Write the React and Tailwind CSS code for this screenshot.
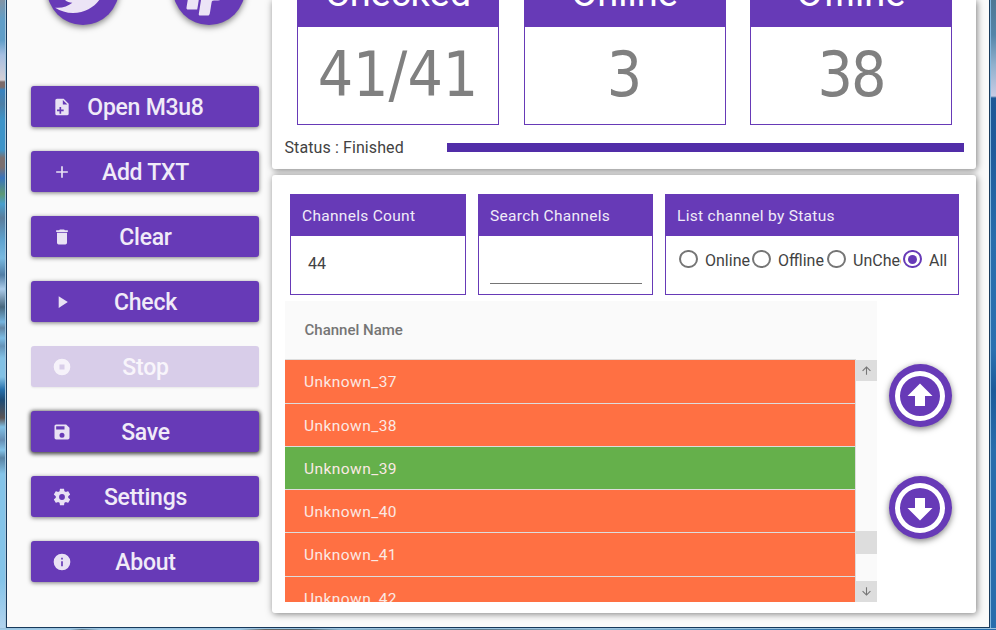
import React, { useState } from 'react';
import clsx from 'clsx';

const ICONS = {
  twitter:
    'M22.46,6C21.69,6.35 20.86,6.58 20,6.69C20.88,6.16 21.56,5.32 21.88,4.31C21.05,4.81 20.13,5.16 19.16,5.36C18.37,4.5 17.26,4 16,4C13.65,4 11.73,5.92 11.73,8.29C11.73,8.63 11.77,8.96 11.84,9.27C8.28,9.09 5.11,7.38 3,4.79C2.63,5.42 2.42,6.16 2.42,6.94C2.42,8.43 3.17,9.75 4.33,10.5C3.62,10.5 2.96,10.3 2.38,10V10.03C2.38,12.11 3.86,13.85 5.82,14.24C5.46,14.34 5.08,14.39 4.69,14.39C4.42,14.39 4.15,14.36 3.89,14.31C4.43,16 6,17.26 7.89,17.29C6.43,18.45 4.58,19.13 2.56,19.13C2.22,19.13 1.88,19.11 1.54,19.07C3.44,20.29 5.7,21 8.12,21C16,21 20.33,14.46 20.33,8.79C20.33,8.6 20.33,8.42 20.32,8.23C21.16,7.63 21.88,6.87 22.46,6Z',
  paypal:
    'M8.32,21.97C8.21,21.92 8.08,21.76 8.06,21.65C8.03,21.5 8,21.76 8.66,17.56C9.26,13.76 9.25,13.82 9.33,13.71C9.46,13.54 9.44,13.54 10.94,13.53C12.26,13.5 12.54,13.5 13.13,13.41C16.38,12.96 18.39,11.05 19.09,7.75C19.13,7.53 19.17,7.34 19.18,7.34C19.18,7.33 19.25,7.38 19.33,7.44C20.36,8.22 20.71,9.66 20.32,11.58C19.86,13.87 18.64,15.39 16.74,16.04C15.93,16.32 15.25,16.43 14.05,16.46C13.25,16.5 13.23,16.5 13,16.65C12.83,16.82 12.84,16.79 12.45,19.2C12.18,20.9 12.08,21.45 12.04,21.55C11.97,21.71 11.83,21.85 11.67,21.93L11.56,22H10C8.71,22 8.38,22 8.32,21.97M3.82,19.74C3.63,19.64 3.5,19.47 3.5,19.27C3.5,19 6.11,2.68 6.18,2.5C6.27,2.32 6.5,2.13 6.68,2.06L6.83,2H10.36C14.27,2 14.12,2 15,2.2C17.62,2.75 18.82,4.5 18.37,7.13C17.87,10.06 16.39,11.8 13.87,12.43C13,12.64 12.39,12.7 10.73,12.7C9.42,12.7 9.32,12.7 9.06,12.85C8.8,13 8.59,13.27 8.5,13.57C8.46,13.67 8.23,15.07 7.97,16.7C7.71,18.33 7.5,19.69 7.47,19.72V19.78H5.69C4.11,19.78 3.89,19.78 3.82,19.74Z',
  filePlus:
    'M14,2H6A2,2 0 0,0 4,4V20A2,2 0 0,0 6,22H18A2,2 0 0,0 20,20V8L14,2M13,3.5L18.5,9H13V3.5M11,15V12H9V15H6V17H9V20H11V17H14V15H11Z',
  plus: 'M19,13H13V19H11V13H5V11H11V5H13V11H19V13Z',
  trash:
    'M19,4H15.5L14.5,3H9.5L8.5,4H5V6H19M6,19A2,2 0 0,0 8,21H16A2,2 0 0,0 18,19V7H6V19Z',
  play: 'M8,5.14V19.14L19,12.14L8,5.14Z',
  stop: 'M12,2A10,10 0 0,0 2,12A10,10 0 0,0 12,22A10,10 0 0,0 22,12A10,10 0 0,0 12,2M9,9H15V15H9',
  save: 'M15,9H5V5H15M12,19A3,3 0 0,1 9,16A3,3 0 0,1 12,13A3,3 0 0,1 15,16A3,3 0 0,1 12,19M17,3H5C3.89,3 3,3.9 3,5V19A2,2 0 0,0 5,21H19A2,2 0 0,0 21,19V7L17,3Z',
  cog: 'M12,15.5A3.5,3.5 0 0,1 8.5,12A3.5,3.5 0 0,1 12,8.5A3.5,3.5 0 0,1 15.5,12A3.5,3.5 0 0,1 12,15.5M19.43,12.97C19.47,12.65 19.5,12.33 19.5,12C19.5,11.67 19.47,11.34 19.43,11L21.54,9.37C21.73,9.22 21.78,8.95 21.66,8.73L19.66,5.27C19.54,5.05 19.27,4.96 19.05,5.05L16.56,6.05C16.04,5.66 15.5,5.32 14.87,5.07L14.5,2.42C14.46,2.18 14.25,2 14,2H10C9.75,2 9.54,2.18 9.5,2.42L9.13,5.07C8.5,5.32 7.96,5.66 7.44,6.05L4.95,5.05C4.73,4.96 4.46,5.05 4.34,5.27L2.34,8.73C2.21,8.95 2.27,9.22 2.46,9.37L4.57,11C4.53,11.34 4.5,11.67 4.5,12C4.5,12.33 4.53,12.65 4.57,12.97L2.46,14.63C2.27,14.78 2.21,15.05 2.34,15.27L4.34,18.73C4.46,18.95 4.73,19.03 4.95,18.95L7.44,17.94C7.96,18.34 8.5,18.68 9.13,18.93L9.5,21.58C9.54,21.82 9.75,22 10,22H14C14.25,22 14.46,21.82 14.5,21.58L14.87,18.93C15.5,18.67 16.04,18.34 16.56,17.94L19.05,18.95C19.27,19.03 19.54,18.95 19.66,18.73L21.66,15.27C21.78,15.05 21.73,14.78 21.54,14.63L19.43,12.97Z',
  info: 'M13,9H11V7H13M13,17H11V11H13M12,2A10,10 0 0,0 2,12A10,10 0 0,0 12,22A10,10 0 0,0 22,12A10,10 0 0,0 12,2Z',
  upCircle:
    'M12,22A10,10 0 0,1 2,12A10,10 0 0,1 12,2A10,10 0 0,1 22,12A10,10 0 0,1 12,22M12,20A8,8 0 0,0 20,12A8,8 0 0,0 12,4A8,8 0 0,0 4,12A8,8 0 0,0 12,20M12,7L7,12H10V16H14V12H17L12,7Z',
  downCircle:
    'M12,2A10,10 0 0,1 22,12A10,10 0 0,1 12,22A10,10 0 0,1 2,12A10,10 0 0,1 12,2M12,4A8,8 0 0,0 4,12A8,8 0 0,0 12,20A8,8 0 0,0 20,12A8,8 0 0,0 12,4M14,8V12H17L12,17L7,12H10V8H14Z',
  arrowUp: 'M13,20H11V8L5.5,13.5L4.08,12.08L12,4.16L19.92,12.08L18.5,13.5L13,8V20Z',
  arrowDown: 'M11,4H13V16L18.5,10.5L19.92,11.92L12,19.84L4.08,11.92L5.5,10.5L11,16V4Z',
};

const Icon = ({ name, className }) => (
  <svg viewBox="0 0 24 24" fill="currentColor" fillRule="evenodd" className={clsx('shrink-0', className)}>
    <path d={ICONS[name]} />
  </svg>
);

const actions = [
  { label: 'Open M3u8', icon: 'filePlus' },
  { label: 'Add TXT', icon: 'plus' },
  { label: 'Clear', icon: 'trash' },
  { label: 'Check', icon: 'play' },
  { label: 'Stop', icon: 'stop', disabled: true },
  { label: 'Save', icon: 'save', raised: true },
  { label: 'Settings', icon: 'cog' },
  { label: 'About', icon: 'info' },
];

const stats = [
  { label: 'Checked', value: '41/41', tracking: 'tracking-normal' },
  { label: 'Online', value: '3', tracking: 'tracking-normal' },
  { label: 'Offline', value: '38', tracking: 'tracking-[-2px]' },
];

const channels = [
  { name: 'Unknown_37', online: false },
  { name: 'Unknown_38', online: false },
  { name: 'Unknown_39', online: true },
  { name: 'Unknown_40', online: false },
  { name: 'Unknown_41', online: false },
  { name: 'Unknown_42', online: false },
];

const filters = [
  { label: 'Online', width: 'w-[73px]' },
  { label: 'Offline', width: 'w-[75px]' },
  { label: 'UnChecked', width: 'mr-[2px] w-[74px]' },
  { label: 'All', width: 'w-[52px]' },
];

const ActionButton = ({ label, icon, disabled, raised }) => (
  <button
    disabled={disabled}
    className={clsx(
      'flex h-[41px] w-[228px] shrink-0 items-center rounded-[3px] pl-[21px]',
      disabled && 'bg-[#d8cde9] text-[#f8f5fb] shadow-[0_1px_2px_rgba(0,0,0,0.08)]',
      !disabled && 'bg-[#673ab7] text-[#f0ebf8]',
      !disabled && !raised && 'shadow-[0_1px_4px_rgba(0,0,0,0.5)]',
      raised && 'shadow-[0_1px_4px_1px_rgba(0,0,0,0.75)]'
    )}
  >
    <Icon name={icon} className="size-[20px] opacity-95" />
    <span className="w-[147px] pt-[3px] text-center text-[23px] leading-[40px] font-[550] tracking-[-0.25px]">{label}</span>
  </button>
);

const RoundButton = ({ icon, size, iconSize, tone }) => (
  <button
    className={clsx(
      'flex shrink-0 items-center justify-center rounded-full bg-[#673ab7] shadow-[0_2px_6px_rgba(0,0,0,0.5)]',
      size,
      tone
    )}
  >
    <Icon name={icon} className={iconSize} />
  </button>
);

const Panel = ({ title, className, children }) => (
  <div className={clsx('flex h-[101px] flex-col border border-[#673ab7]', className)}>
    <div className="h-[41px] shrink-0 bg-[#673ab7] pl-[11px] text-[15.5px] leading-[42px] font-[450] tracking-[0.3px] text-[#f0ebf8]">{title}</div>
    {children}
  </div>
);

const Radio = ({ checked }) => (
  <span
    className={clsx(
      'flex h-[18px] w-[19px] shrink-0 items-center justify-center rounded-full border-2',
      checked ? 'border-[#673ab7]' : 'border-[#757575]'
    )}
  >
    {checked && <span className="size-[9px] rounded-full bg-[#673ab7]" />}
  </span>
);

export default function App() {
  const [filter, setFilter] = useState('All');

  return (
    <div className="flex h-[630px] w-[996px] flex-col overflow-hidden bg-[#3b7fb5] font-['Roboto',sans-serif] text-[#424242]">
      <div className="flex h-[628px] shrink-0">
        {/* Desktop, left edge */}
        <div className="w-[6px] shrink-0 border-r border-[#a3c6dd] bg-[linear-gradient(180deg,#8394a5_0px,#609ec8_20px,#609ec8_40px,#a5bfe2_55px,#d5d0d5_80px,#7c6b69_82px,#7c6b69_87px,#3683c0_90px,#4d7fa6_104px,#3d94c9_120px,#3d94c9_150px,#7b706f_158px,#7b706f_167px,#3874bd_178px,#5d9975_194px,#489fce_204px,#5b7d9b_218px,#5fa3cf_240px,#78b9e0_258px,#517ea6_275px,#aacbe9_289px,#48687e_307px,#75b4de_322px,#6486a4_328px,#7bbce4_338px,#6593b8_346px,#82c1e5_358px,#82c1e5_377px,#236da9_390px,#1d4b75_400px,#5c5454_418px,#80c0e5_427px,#668eb4_440px,#83c3e8_450px,#5983a4_458px,#84c4e9_474px,#84c4e9_580px,#b1d3ee_628px)]" />

        {/* App window */}
        <div className="flex w-[984px] shrink-0 overflow-hidden border-x border-b border-[#17395b] bg-[#fafafa]">
          <aside className="flex w-[265px] shrink-0 flex-col pl-6">
            <div className="-mt-[47.5px] flex gap-[54px] pl-[16px]">
              <RoundButton icon="twitter" size="size-[72px]" iconSize="size-[65px]" tone="text-[#ece4f6]" />
              <RoundButton icon="paypal" size="size-[72px]" iconSize="size-[65px]" tone="text-[#ece4f6]" />
            </div>
            <div className="mt-[61.5px] flex flex-col gap-6">
              {actions.map((action) => (
                <ActionButton key={action.label} {...action} />
              ))}
            </div>
          </aside>

          <main className="flex w-[704px] shrink-0 flex-col gap-[6px]">
            {/* Check results */}
            <section className="h-[169px] shrink-0 rounded-b-[3px] bg-white shadow-[1px_1px_7px_rgba(0,0,0,0.5)]">
              <div className="-mt-[32px] flex gap-[24.5px] pl-[25px]">
                {stats.map((stat) => (
                  <div key={stat.label} className="h-[157px] w-[202px] shrink-0 border border-[#673ab7]">
                    <div className="h-[58px] bg-[#673ab7] text-center text-[38px] leading-[48px] font-[450] text-white">
                      {stat.label}
                    </div>
                    <div
                      className={clsx(
                        "text-center font-['DejaVu_Sans_Condensed','DejaVu_Sans',sans-serif] text-[62px] leading-[96px] font-stretch-condensed text-[#808080]",
                        stat.tracking
                      )}
                    >
                      {stat.value}
                    </div>
                  </div>
                ))}
              </div>
              <div className="flex h-[44px] items-center pl-[12.5px]">
                <span className="w-[162px] pt-[2px] text-[16px] tracking-[0.1px]">Status : Finished</span>
                <div className="h-[9px] w-[517px] bg-[#512da8]" />
              </div>
            </section>

            {/* Channel list */}
            <section className="h-[438px] shrink-0 rounded-[3px] bg-white pt-[19px] shadow-[1px_1px_7px_rgba(0,0,0,0.5)]">
              <div className="flex gap-[12px] pl-[18px]">
                <Panel title="Channels Count" className="w-[176px]">
                  <span className="pt-[16px] pl-[17px] text-[16px] leading-6">44</span>
                </Panel>
                <Panel title="Search Channels" className="w-[175px]">
                  <input className="mt-[18px] mr-[10px] ml-[11px] h-[30px] border-b border-[#757575] outline-none" />
                </Panel>
                <Panel title="List channel by Status" className="w-[294px]">
                  <div className="flex pt-[14px] pl-[13px]">
                    {filters.map(({ label, width }) => (
                      <label
                        key={label}
                        onClick={() => setFilter(label)}
                        className={clsx('flex shrink-0 items-start gap-[7px] overflow-hidden text-[16px] leading-[20px]', width)}
                      >
                        <Radio checked={filter === label} />
                        <span className="pt-px">{label}</span>
                      </label>
                    ))}
                  </div>
                </Panel>
              </div>

              <div className="mt-[6px] flex pl-[13px]">
                <div className="w-[592px] shrink-0 bg-[#fafafa]">
                  <div className="h-[58.3px] pl-[19.5px] text-[15px] leading-[58px] font-medium text-[#757575]">Channel Name</div>
                  <div className="flex h-[242.7px] overflow-hidden">
                    <div className="w-[571px] shrink-0 border-r border-[#dddddd]">
                      {channels.map((channel) => (
                        <div
                          key={channel.name}
                          className={clsx(
                            'h-[43.25px] border-t border-[#dddddd] pl-[19px] text-[15.5px] leading-[44px] font-[450] tracking-[0.45px] text-[#fbe9e4]',
                            channel.online ? 'bg-[#65b04b]' : 'bg-[#ff7043]'
                          )}
                        >
                          {channel.name}
                        </div>
                      ))}
                    </div>
                    {/* Scrollbar */}
                    <div className="flex w-[21px] flex-col pt-px text-[#757575]">
                      <div className="flex h-[21px] items-center justify-center bg-[#dddddd]">
                        <Icon name="arrowUp" className="size-[13px]" />
                      </div>
                      <div className="mt-[150px] h-[23px] bg-[#dddddd]" />
                      <div className="mt-[27px] flex h-[21px] items-center justify-center bg-[#dddddd]">
                        <Icon name="arrowDown" className="size-[13px]" />
                      </div>
                    </div>
                  </div>
                </div>
                <div className="flex flex-col gap-[49px] pt-[63px] pl-3">
                  <RoundButton icon="upCircle" size="size-[63px] pr-px" iconSize="size-[60px]" tone="text-white" />
                  <RoundButton icon="downCircle" size="size-[63px] pr-px" iconSize="size-[60px]" tone="text-white" />
                </div>
              </div>
            </section>
          </main>
        </div>

        {/* Desktop, right edge */}
        <div className="w-[6px] shrink-0 border-l border-[#83b8df] bg-[linear-gradient(180deg,#4f7794_0px,#5485a9_35px,#90b0cd_65px,#c7cbe3_96px,#1d5896_98px,#1f5b9b_150px,#286dac_240px,#2a70b0_350px,#1c5b9a_390px,#286dac_450px,#286dac_628px)]" />
      </div>
      {/* Desktop, below the window */}
      <div className="h-[2px] border-t border-[#9cc3df] bg-[linear-gradient(90deg,#9fcbe7_0px,#9fcbe7_70px,#637d8b_82px,#9fcbe7_100px,#9fcbe7_240px,#676762_265px,#53666f_310px,#8db9d3_340px,#5c7686_480px,#8db9d3_600px,#2a6ca5_820px,#286dac_996px)]" />
    </div>
  );
}
